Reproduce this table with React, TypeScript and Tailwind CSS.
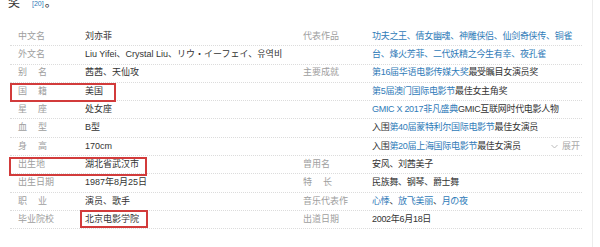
import React from 'react';

const A = ({ children }: { children: React.ReactNode }) => (
  <span className="text-[#2f7bb8]">{children}</span>
);

interface Row {
  l?: React.ReactNode;
  lv?: React.ReactNode;
  r?: React.ReactNode;
  rv?: React.ReactNode;
  box?: 'nation' | 'birth' | 'school';
  more?: boolean;
}

const Pair = ({ a, b }: { a: string; b: string }) => (
  <span className="tracking-[11px]">
    {a}
    <span className="tracking-normal">{b}</span>
  </span>
);

const rows: Row[] = [
  { l: '中文名', lv: '刘亦菲', r: '代表作品', rv: <A>功夫之王、倩女幽魂、神雕侠侣、仙剑奇侠传、铜雀</A> },
  { l: '外文名', lv: 'Liu Yifei、Crystal Liu、リウ・イーフェイ、유역비', rv: <A>台、烽火芳菲、二代妖精之今生有幸、夜孔雀</A> },
  { l: <Pair a="别" b="名" />, lv: '茜茜、天仙攻', r: '主要成就', rv: <><A>第16届华语电影传媒大奖</A>最受瞩目女演员奖</> },
  { l: <Pair a="国" b="籍" />, lv: '美国', rv: <><A>第5届澳门国际电影节</A>最佳女主角奖</>, box: 'nation' },
  { l: <Pair a="星" b="座" />, lv: '处女座', rv: <><A>GMIC X 2017非凡盛典</A>GMIC互联网时代电影人物</> },
  { l: <Pair a="血" b="型" />, lv: 'B型', rv: <>入围<A>第40届蒙特利尔国际电影节</A>最佳女演员</> },
  { l: <Pair a="身" b="高" />, lv: '170cm', rv: <>入围<A>第20届上海国际电影节</A>最佳女演员</>, more: true },
  { l: '出生地', lv: '湖北省武汉市', r: '曾用名', rv: '安风、刘茜美子', box: 'birth' },
  { l: '出生日期', lv: '1987年8月25日', r: <Pair a="特" b="长" />, rv: '民族舞、钢琴、爵士舞' },
  { l: <Pair a="职" b="业" />, lv: '演员、歌手', r: '音乐代表作', rv: <><A>心悸</A>、<A>放飞美丽</A>、<A>月の夜</A></> },
  { l: '毕业院校', lv: '北京电影学院', r: '出道日期', rv: '2002年6月18日', box: 'school' },
];

const boxClass: Record<string, string> = {
  nation: 'left-0 top-[0px] w-[106px] h-[19px]',
  birth: 'left-[-1px] top-[1px] w-[138px] h-[19px]',
  school: 'left-[70px] top-[-1px] w-[68px] h-[18px]',
};

export default function App() {
  return (
    <div className="w-[600px] h-[247px] overflow-hidden bg-white flex font-['Liberation_Sans','Noto_Sans_CJK_SC','Noto_Sans_CJK_KR',sans-serif]">
      <div className="w-[593px] border-r border-[#ececec]">
        <div className="-mt-[3px] h-[12px] leading-[12px] pl-[8px] text-[12px] text-[#333] whitespace-nowrap">
          奖<span className="ml-[12px] text-[7px] text-[#2f7bb8] relative top-[-1px]">[20]</span>
          <span className="ml-[1px]">。</span>
        </div>
        <div className="mt-[19px] ml-[10px] w-[572px] text-[9px]">
          {rows.map((row, i) => (
            <div
              key={i}
              className="relative h-[18.3px] grid grid-cols-[75px_218px_69px_1fr] items-center border-b border-dotted border-[#dcdcdc] whitespace-nowrap"
            >
              <div className="pl-[8px] text-[#9e9e9e]">{row.l}</div>
              <div className="text-[#333]">{row.lv}</div>
              <div className="text-[#9e9e9e]">{row.r}</div>
              <div className="text-[#333] flex items-center justify-between pr-[2px]">
                <span className="tracking-[-0.3px]">{row.rv}</span>
                {row.more && (
                  <span className="flex items-center gap-[4px] text-[#aaa]">
                    <svg width="7" height="5" viewBox="0 0 7 5" fill="none">
                      <path d="M0.5 1 L3.5 4 L6.5 1" stroke="#bbb" strokeWidth="1" />
                    </svg>
                    展开
                  </span>
                )}
              </div>
              {row.box && (
                <div className={`absolute border-2 border-[#d23b3b] ${boxClass[row.box]}`} />
              )}
            </div>
          ))}
        </div>
      </div>
    </div>
  );
}
